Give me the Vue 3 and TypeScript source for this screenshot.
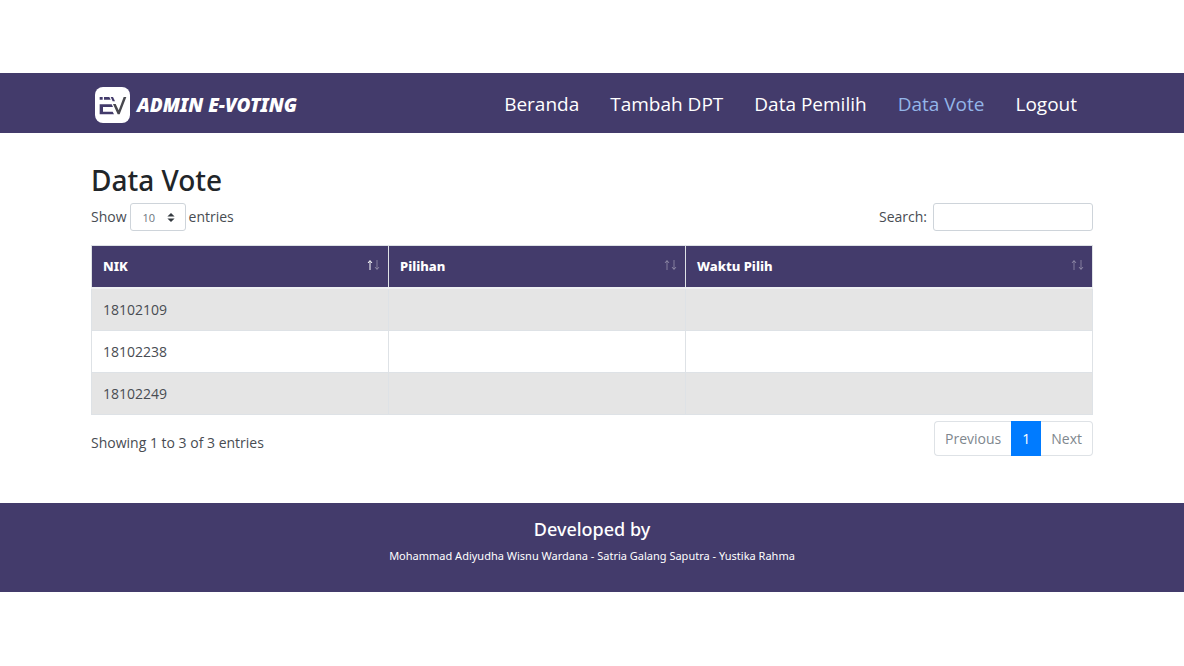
<script setup lang="ts">
import { computed, ref } from 'vue'

interface Vote {
  nik: string
  pilihan: string
  waktu: string
}

const links: string[] = ['Beranda', 'Tambah DPT', 'Data Pemilih', 'Data Vote', 'Logout']
const active = 'Data Vote'
const columns: string[] = ['NIK', 'Pilihan', 'Waktu Pilih']
const votes: Vote[] = [
  { nik: '18102109', pilihan: '', waktu: '' },
  { nik: '18102238', pilihan: '', waktu: '' },
  { nik: '18102249', pilihan: '', waktu: '' },
]

const pageSize = ref(10)
const search = ref('')
const shown = computed<Vote[]>(() =>
  votes.filter((v) => v.nik.includes(search.value.trim())).slice(0, pageSize.value),
)
</script>

<template>
  <div class="page">
    <header class="navbar">
      <div class="container bar">
        <a class="brand" href="#">
          <svg class="logo" viewBox="0 0 105 108" aria-hidden="true">
            <rect width="105" height="108" rx="24" fill="#fff" />
            <g fill="#433b6b">
              <path d="M14 30h9v8h-9zM27 30h16l4 8H27z" />
              <path d="M14 52h36l4 8H24v14h29l4 8H14z" />
              <path d="M47 30h7l6 13h-7z" />
            </g>
            <path d="M54 51h8l9 19 15-40h8L74 82h-6z" fill="#48484e" />
          </svg>
          <span>ADMIN E-VOTING</span>
        </a>
        <nav class="links">
          <a v-for="l in links" :key="l" href="#" :class="{ active: l === active }">{{ l }}</a>
        </nav>
      </div>
    </header>

    <main class="container content">
      <h1>Data Vote</h1>
      <div class="tools">
        <label class="length">
          Show
          <span class="select-wrap">
            <select v-model="pageSize">
              <option :value="10">10</option>
              <option :value="25">25</option>
              <option :value="50">50</option>
            </select>
            <svg viewBox="0 0 8 10" aria-hidden="true"><path d="M4 0l4 4H0zM4 10l4-4H0z" fill="#343a40" /></svg>
          </span>
          <span>entries</span>
        </label>
        <label class="search">Search: <input v-model="search" type="search" /></label>
      </div>

      <table>
        <thead>
          <tr>
            <th v-for="(c, i) in columns" :key="c" scope="col">
              <div class="head">
                <span>{{ c }}</span>
                <svg class="sort" viewBox="0 0 14 12" aria-hidden="true" fill="none" stroke="#fff">
                  <path :class="{ on: i === 0 }" d="M4 11V2M2 4l2-2.500 2 2.500" />
                  <path d="M11 1v9M9 8l2 2.500 2-2.500" />
                </svg>
              </div>
            </th>
          </tr>
        </thead>
        <tbody>
          <tr v-for="v in shown" :key="v.nik">
            <td>{{ v.nik }}</td>
            <td>{{ v.pilihan }}</td>
            <td>{{ v.waktu }}</td>
          </tr>
        </tbody>
      </table>

      <div class="foot">
        <p>Showing 1 to {{ shown.length }} of {{ votes.length }} entries</p>
        <nav class="pages" aria-label="Pagination">
          <button type="button">Previous</button>
          <button type="button" class="current">1</button>
          <button type="button">Next</button>
        </nav>
      </div>
    </main>

    <footer>
      <h2>Developed by</h2>
      <p>Mohammad Adiyudha Wisnu Wardana - Satria Galang Saputra - Yustika Rahma</p>
    </footer>
  </div>
</template>

<style scoped>
.page {
  padding: 73px 0;
  font-family: 'Open Sans', 'Noto Sans', sans-serif;
  font-size: 14px;
  line-height: 20px;
  color: #484c52;
}
.container {
  box-sizing: border-box;
  width: calc(100% - 32px);
  max-width: 1002px;
  margin: 0 auto;
}
.navbar {
  background: #433b6b;
}
.bar {
  display: flex;
  justify-content: space-between;
  align-items: center;
  height: 60px;
  padding: 0 16px 0 4px;
}
a {
  color: #fff;
  text-decoration: none;
}
.brand {
  display: flex;
  align-items: center;
  gap: 7px;
  padding-top: 4px;
  font-family: 'Noto Sans', sans-serif;
  font-size: 19px;
  font-weight: 900;
  font-style: italic;
}
.logo {
  width: 35px;
  height: 36px;
}
.links {
  display: flex;
  gap: 31px;
  padding-top: 2px;
  font-size: 19px;
  line-height: 28px;
}
.links a.active {
  color: #93b5e8;
}
.content {
  padding: 27px 0 47px;
}
h1 {
  margin: 0 0 3px;
  font-family: 'Noto Sans', sans-serif;
  font-size: 28px;
  line-height: 40px;
  font-weight: 500;
  color: #212529;
}
.tools,
.foot {
  display: flex;
  justify-content: space-between;
  align-items: center;
}
.length {
  display: flex;
  align-items: center;
  gap: 3px;
}
.search {
  display: flex;
  align-items: center;
  gap: 6px;
}
.select-wrap {
  position: relative;
  display: flex;
}
.select-wrap svg {
  position: absolute;
  right: 11px;
  top: 10px;
  width: 8px;
  height: 9px;
  pointer-events: none;
}
select,
input {
  box-sizing: border-box;
  height: 28px;
  border: 1px solid #ced4da;
  border-radius: 3px;
  background: #fff;
  font-family: inherit;
  color: #6c757d;
}
select {
  appearance: none;
  width: 56px;
  padding: 0 12px;
  font-size: 11px;
}
input {
  appearance: none;
  width: 160px;
  padding: 0 8px;
  font-size: 12px;
}
table {
  width: 100%;
  margin: 14px 0 6px;
  table-layout: fixed;
  border-collapse: collapse;
}
th,
td {
  border: 1px solid #dee2e6;
  padding: 10px 11px;
  line-height: 21px;
  text-align: left;
}
th {
  padding: 10px 8px 10px 11px;
  background: #433b6b;
  border-bottom: 2px solid #eef0f2;
  color: #fff;
  font-family: 'Noto Sans', sans-serif;
  font-size: 13px;
  font-weight: 800;
}
th:nth-child(1),
th:nth-child(2) {
  width: 277px;
}
.head {
  display: flex;
  justify-content: space-between;
}
.sort {
  width: 14px;
  height: 12px;
  margin-top: 3px;
}
.sort path {
  opacity: 0.35;
}
.sort path.on {
  opacity: 1;
}
tbody tr:nth-child(odd) {
  background: #e5e5e5;
}
.foot p {
  margin: 9px 0 0;
}
.pages {
  display: flex;
}
.pages button {
  height: 35px;
  margin: 0;
  padding: 0 10px;
  border: 1px solid #dee2e6;
  background: #fff;
  color: #80878e;
  font-family: inherit;
  font-size: 14px;
}
.pages button:first-child {
  border-right: 0;
  border-radius: 4px 0 0 4px;
}
.pages button:last-child {
  border-left: 0;
  border-radius: 0 4px 4px 0;
}
.pages .current {
  background: #007bff;
  border-color: #007bff;
  color: #fff;
}
footer {
  padding: 15px 16px 27px;
  background: #433b6b;
  color: #fff;
  text-align: center;
}
footer h2 {
  margin: 0 0 7px;
  font-family: 'Noto Sans', sans-serif;
  font-size: 18px;
  line-height: 22px;
  font-weight: 500;
}
footer p {
  margin: 0;
  font-family: 'Noto Sans', sans-serif;
  font-size: 11px;
  line-height: 18px;
}
</style>

<style>
body {
  background: #fff;
}
</style>
